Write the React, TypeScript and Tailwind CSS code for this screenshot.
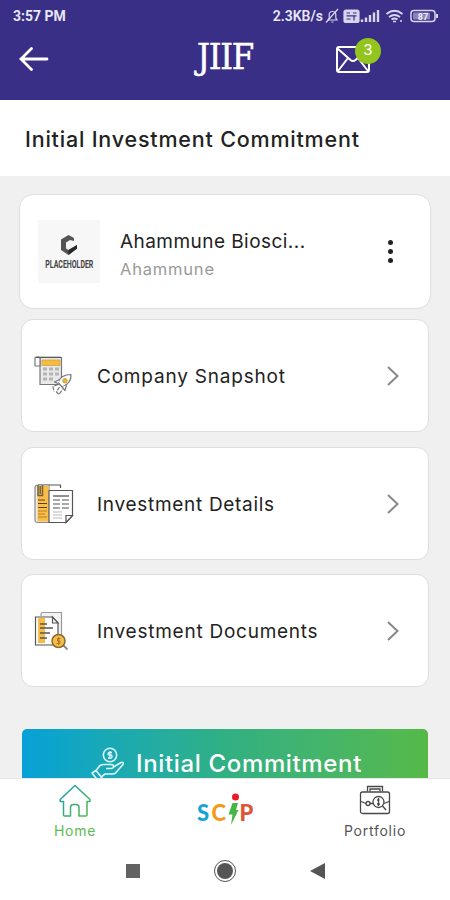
function SnapshotIcon() {
  return (
    <svg width="40" height="40" viewBox="0 0 40 40" fill="none" stroke="#777" strokeWidth="1.2" strokeLinejoin="round">
      <path d="M6 1.5H27.5V28.5H6Z" fill="#e9e9e9" />
      <path d="M1 2C1 .8 6 .8 6 2V10H1Z" fill="#fff" />
      <path d="M2 1.3H27" stroke="#555" />
      <rect x="8" y="4" width="18" height="5.5" fill="#f6bc3d" stroke="#cfa24a" strokeWidth="0.8" />
      <path d="M9 13h4M15 13h4M21 13h4M9 18h4M15 18h4M21 18h4M9 23h4M15 23h4" stroke="#b5b5b5" strokeWidth="3" />
      <path d="M37 18.5C31 18.500 26 21 24 26.500L28 31C33 29 37.500 25 37 18.500Z" fill="#fff" />
      <path d="M26 23.500l-5.500 2.500 3.500 1.500M32.500 29l-1.500 5.500-3-3.500" fill="#fff" />
      <circle cx="31" cy="24.800" r="2.200" fill="#f6b530" stroke="#c58d28" strokeWidth="0.8" />
      <path d="M24 28.500l-5 2 1 5M25.500 31l-3 5 2.500 2.500 3.500-5" strokeDasharray="4 1" />
    </svg>
  )
}

function DetailsIcon() {
  return (
    <svg width="40" height="40" viewBox="0 0 40 40" fill="none" stroke="#555" strokeWidth="1.2">
      <path d="M4 1H26.500V4" />
      <path d="M1 3.500Q1 1 4 1H15V38.500H4Q1 38.500 1 36Z" fill="#eee" stroke="#888" />
      <path d="M3.500 2H15V37.500H3.500Z" fill="#f8be48" stroke="none" />
      <path d="M4 1V11.500H8.500V1M6.200 2V10" stroke="#75603a" strokeWidth="1.5" />
      <path d="M4 16h7M4 19.500h9M4 23.500h9" stroke="#5d4421" />
      <path d="M4 27h9M4 30h7M4 33h9" stroke="#ba7f29" />
      <path d="M15 6.500H38.500V31.500L32 38.500H15Z" fill="#fff" strokeLinejoin="round" />
      <path d="M32 38.500V31.500H38.500Z" fill="#fff" />
      <path d="M19 12h16" strokeWidth="1.3" />
      <path d="M19 16h16M19 20h16M19 24h16" strokeDasharray="7 2" />
      <path d="M19 28h9M19 31h9M19 34h9" stroke="#bbb" />
    </svg>
  )
}

function DocumentsIcon() {
  return (
    <svg width="36" height="40" viewBox="0 0 36 40" fill="none" stroke="#555" strokeWidth="1.2">
      <path d="M7 5V3Q7 1.500 9 1.500H27.500V25" fill="#f3f3f3" stroke="#999" />
      <path d="M1.500 6H18.500L24 12V34H1.500Z" fill="#fff" />
      <path d="M4 7H11V32H4Z" fill="#f7bc48" stroke="none" />
      <path d="M18.500 6V12H24Z" fill="#fff" />
      <path d="M6 13h7M6 17h13M6 22h10M6 27h7" strokeWidth="1.4" />
      <path d="M28.500 33.500L33.500 38.500" strokeWidth="1.8" stroke="#888" />
      <circle cx="24.500" cy="30" r="6.500" fill="#f5bd4c" stroke="#8b682c" strokeWidth="1.5" />
      <path d="M26.500 27.500H23.500V30H26V32.500H22.500M24.700 26V34" stroke="#a27325" strokeWidth="0.9" />
    </svg>
  )
}

function StatusIcons() {
  return (
    <svg width="114" height="16" viewBox="0 0 114 16" fill="none" stroke="#d9d5ef" strokeWidth="1.2">
      {/* muted bell */}
      <path d="M3 12H12L10.800 10V6.500C10.800 4.500 9.500 3.500 7.500 3.500S4.200 4.500 4.200 6.500V10Z" />
      <path d="M1 14.500L13 1M6.500 14h2" />
      {/* volte badge */}
      <rect x="19" y="2" width="15" height="12.500" rx="2" fill="#d9d5ef" />
      <path d="M21.500 5h3.500M28 5h3.500M21.500 11h4M29 8.500v4M21.500 7.800h10" stroke="#392f86" />
      {/* signal */}
      <path d="M37 14V11.500M41 14V9.500M45 14V7M49 14V4.500M53 14V2" strokeWidth="2.400" />
      {/* wifi */}
      <path d="M61.500 6Q69.500 -0.500 77.500 6M64 9Q69.500 5 75 9M66.500 11.500Q69.500 9.500 72.500 11.500" strokeWidth="1.900" />
      <path d="M68 13.500h3M76 12v2" strokeWidth="1.500" />
      {/* battery */}
      <rect x="86" y="2.500" width="24" height="11" rx="3" strokeWidth="1.500" />
      <path d="M112 6v4" strokeWidth="2" />
      <rect x="88" y="4.500" width="17" height="7" rx="1" fill="#8983bb" stroke="none" />
      <text x="98" y="11.500" textAnchor="middle" fontSize="9" fontWeight="700" fontFamily="Roboto" fill="#eeecf8" stroke="none">
        87
      </text>
    </svg>
  )
}

function HandCoinIcon() {
  return (
    <svg width="34" height="34" viewBox="0 0 34 34" fill="none" stroke="#dcf7ff" strokeWidth="1.600" strokeLinejoin="round">
      <circle cx="19" cy="8" r="6.700" />
      <path d="M21 5.500H18.500Q17 5.500 17 7T19 8T21 9.500T19.500 11H17M19 4V12" strokeWidth="1.300" />
      <path d="M1 26L5 23.500L11 31L7 33.500Z" />
      <path d="M5 23.500L9 18.500Q10.500 17.500 13 17.500H20Q23 17.500 22.500 20Q22 21.500 20 21.500H15M22.500 20L30 15.500Q33 14.500 32 17.500L24.500 26Q23.500 27 21.500 27H14L10 30" />
    </svg>
  )
}

function HomeIcon() {
  return (
    <svg width="32" height="33" viewBox="0 0 32 33" fill="none">
      <defs>
        <linearGradient id="home" x1="0" y1="0" x2="1" y2="1">
          <stop stopColor="#159ebd" />
          <stop offset="1" stopColor="#55b947" />
        </linearGradient>
      </defs>
      <path
        d="M16 1.500L1.200 15.500V17.500H4.500V31Q4.500 32 5.500 32H11.500V23.500Q11.500 20.500 14.500 20.500H17Q20 20.500 20 23.500V32H27Q28 32 28 31V17.500H31V15.500Z"
        stroke="url(#home)"
        strokeWidth="1.500"
        strokeLinejoin="round"
      />
    </svg>
  )
}

function PortfolioIcon() {
  return (
    <svg width="32" height="30" viewBox="0 0 32 30" fill="none" stroke="#484848" strokeWidth="1.300">
      <path d="M8.500 6.500V1.500H23.500V6.500M11 6.500V4H21V6.500" />
      <rect x="1.500" y="7" width="29" height="21.500" rx="2" />
      <path d="M2 16.500L7 18.500M11 18.500H14M25 18.500L30 16.500" />
      <circle cx="9" cy="18.500" r="2" />
      <circle cx="19.500" cy="17" r="5.500" />
      <path d="M19.500 13V21M18 15h2.500M18 19h3M23.500 21L27 25" />
    </svg>
  )
}

function ScipLogo() {
  return (
    <svg width="58" height="34" viewBox="0 0 58 34" fontFamily="Lato, sans-serif" fontWeight="900" fontSize="22">
      <text x="1" y="28" fill="#16a3d5">S</text>
      <text x="15.500" y="28" fill="#f29b17">C</text>
      <circle cx="39.500" cy="4" r="3.500" fill="#ed1c24" />
      <path d="M36.500 10H42L40 17H42.500L35 32L36.500 21.500H32.500Z" fill="#45b546" />
      <text x="43.500" y="28" fill="#dc5534">P</text>
    </svg>
  )
}

function BackArrow() {
  return (
    <svg width="30" height="24" viewBox="0 0 30 24" fill="none" stroke="#fff" strokeWidth="2.800" strokeLinecap="round">
      <path d="M12.500 1.500L2 12L12.500 22.500M2 12H28" />
    </svg>
  )
}

function Chevron() {
  return (
    <svg width="12" height="20" viewBox="0 0 12 20" fill="none" stroke="#888" strokeWidth="2">
      <path d="M1 1L10.500 10L1 19" />
    </svg>
  )
}

const items = [
  { label: "Company Snapshot", icon: <SnapshotIcon />, style: "mb-[15px] h-[113px]", text: "tracking-[0.8px]" },
  { label: "Investment Details", icon: <DetailsIcon />, style: "mb-[14px] h-[113px]", text: "tracking-[0.7px]" },
  { label: "Investment Documents", icon: <DocumentsIcon />, style: "h-[113px]", text: "tracking-[0.75px]" },
]

export default function App() {
  return (
    <div className="flex h-[900px] w-[450px] flex-col overflow-hidden bg-[#f0f0f0] font-['Inter',sans-serif] text-[#222]">
      <header className="h-[100px] shrink-0 bg-[#392f86] text-white">
        <div className="flex h-8 items-center justify-between pr-[11px] pl-[13px] font-['Roboto',sans-serif] text-sm font-bold text-[#eae8f7]">
          <span>3:57 PM</span>
          <div className="flex items-center gap-[2px]">
            <span className="text-[14px] font-semibold">2.3KB/s</span>
            <StatusIcons />
          </div>
        </div>
        <div className="flex h-[54px] items-center">
          <div className="ml-[19px]">
            <BackArrow />
          </div>
          <div className="mb-1 ml-[148px] w-[62px] font-['DejaVu_Serif_Condensed','DejaVu_Serif',serif] text-[36px] leading-none tracking-[-1.3px] [-webkit-text-stroke:0.5px_white]">
            JIIF
          </div>
          <div className="relative ml-[77px]">
            <svg width="34" height="27" viewBox="0 0 34 27" fill="none" stroke="#fff" strokeWidth="2">
              <rect x="1" y="1" width="32" height="25" rx="2" />
              <path d="M1 2L14.500 14Q17 16 19.500 14L33 2M2 25L12 12M22 12L32 25" />
            </svg>
            <span className="absolute -top-[8px] left-[19px] flex h-[26px] w-[26px] items-center justify-center rounded-full bg-[#94c51e] text-[15px]">
              3
            </span>
          </div>
        </div>
      </header>

      <div className="flex h-[76px] shrink-0 items-center bg-white pt-0.5 pl-[25px]">
        <h1 className="text-[21.5px] font-medium tracking-[0.8px] whitespace-nowrap">Initial Investment Commitment</h1>
      </div>

      <main className="flex min-h-0 flex-1 flex-col overflow-hidden pt-[18px]">
        <section className="mx-[19px] mb-[10px] flex h-[115px] shrink-0 items-center rounded-[14px] border border-[#dedede] bg-white pl-[18px]">
          <div className="flex h-[63px] w-[62px] flex-col items-center justify-center bg-[#f7f7f7]">
            <svg width="20" height="23" viewBox="0 0 20 23" fill="none">
              <path d="M15 7V4L9.500 1L2 5.500V16L9.500 21L18 14.500V11L9.500 16L7 14.500V8.500L11 6Z" fill="#555" />
              <path d="M9.500 16L18 11V14.500L9.500 21Z" fill="#292929" />
            </svg>
            <span className="mt-[3px] scale-x-[0.7] font-['Roboto',sans-serif] text-[10px] leading-none font-bold whitespace-nowrap text-[#444]">
              PLACEHOLDER
            </span>
          </div>
          <div className="ml-5 flex-1 pt-[7px]">
            <div className="text-[19px] leading-7 tracking-[0.45px]">Ahammune Biosci...</div>
            <div className="text-[16.5px] leading-[27px] tracking-[0.8px] text-[#999]">Ahammune</div>
          </div>
          <div className="mr-[37px] flex flex-col gap-1">
            <span className="h-[5px] w-[5px] rounded-full bg-[#222]" />
            <span className="h-[5px] w-[5px] rounded-full bg-[#222]" />
            <span className="h-[5px] w-[5px] rounded-full bg-[#222]" />
          </div>
        </section>

        {items.map((item) => (
          <section
            key={item.label}
            className={`mx-[21px] flex shrink-0 items-center rounded-xl border border-[#dedede] bg-white pr-[29px] pl-3 ${item.style}`}
          >
            <div className="w-[63px]">{item.icon}</div>
            <span className={`flex-1 pt-[3px] text-[19px] ${item.text}`}>{item.label}</span>
            <Chevron />
          </section>
        ))}

        <button className="mx-[22px] mt-[42px] flex h-[70px] shrink-0 items-center rounded-[5px] bg-linear-to-r from-[#07a1d7] via-[#31b083] to-[#56b947] pl-[69px] text-[24px] font-medium text-white">
          <HandCoinIcon />
          <span className="ml-[11px] tracking-[0.65px] whitespace-nowrap">Initial Commitment</span>
        </button>
      </main>

      <footer className="h-[122px] shrink-0 border-t border-[#e8e8e8] bg-white">
        <nav className="flex h-[63px] items-start justify-between text-[14px]">
          <div className="flex w-[150px] flex-col items-center pt-[5px] text-[#5dbb52]">
            <HomeIcon />
            <span className="mt-1 leading-5 tracking-[0.7px]">Home</span>
          </div>
          <div className="flex w-[150px] justify-center pt-[14px]">
            <ScipLogo />
          </div>
          <div className="flex w-[150px] flex-col items-center pt-[6px] text-[#555]">
            <PortfolioIcon />
            <span className="mt-[6px] leading-5 tracking-[0.75px]">Portfolio</span>
          </div>
        </nav>
        <div className="flex h-[58px] items-center justify-center gap-[74px]">
          <span className="h-[14px] w-[14px] bg-[#626262]" />
          <span className="flex h-[22px] w-[22px] items-center justify-center rounded-full border-[1.5px] border-[#555]">
            <span className="h-4 w-4 rounded-full bg-[#555]" />
          </span>
          <svg width="15" height="16" viewBox="0 0 15 16">
            <path d="M0 8L15 0V16Z" fill="#555" />
          </svg>
        </div>
      </footer>
    </div>
  )
}
